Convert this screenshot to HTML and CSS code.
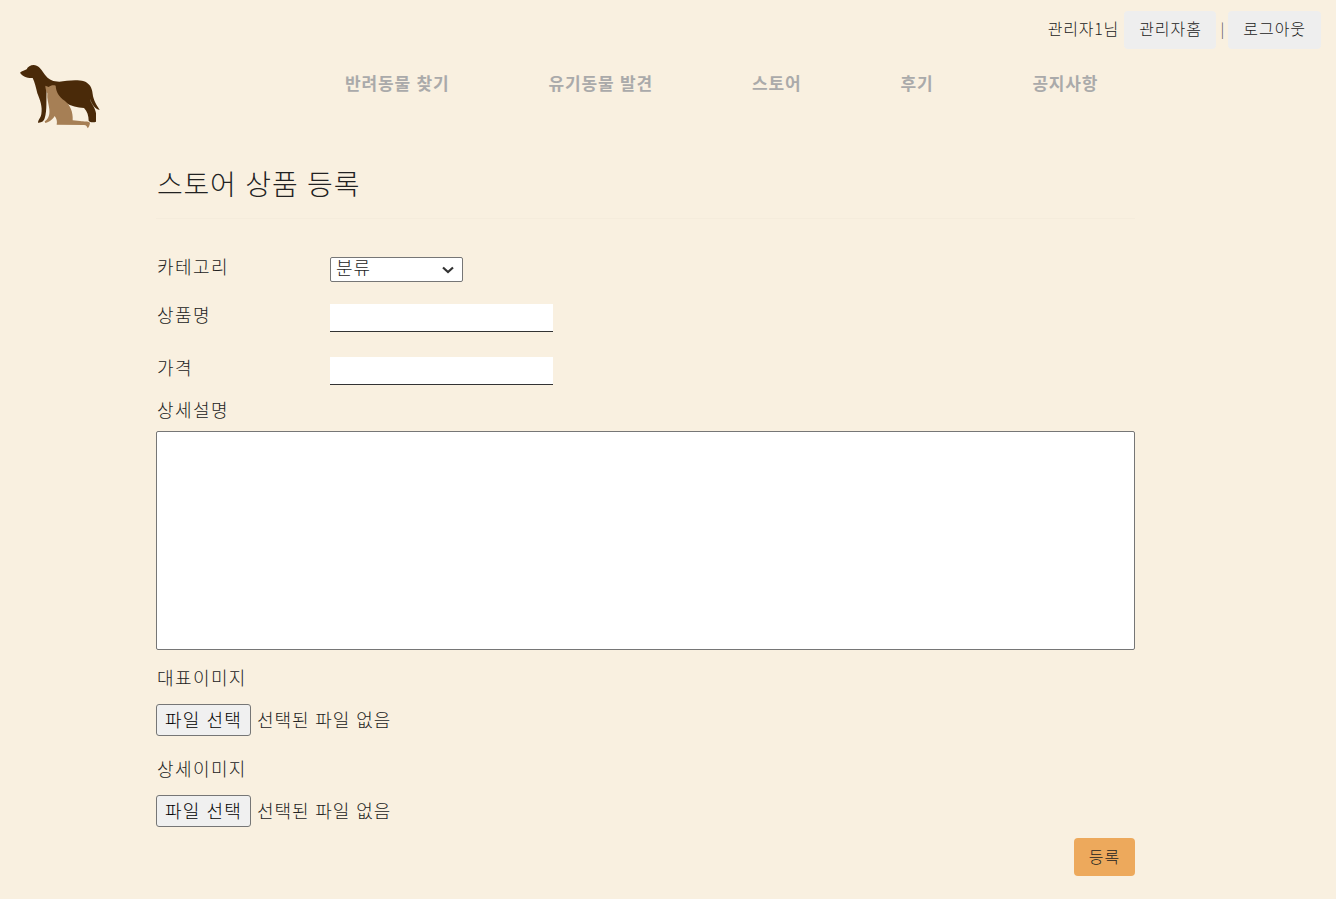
FILE: index.html
```html
<!DOCTYPE html>
<html lang="ko">
<head>
<meta charset="utf-8">
<title>스토어 상품 등록</title>
<link rel="stylesheet" href="styles.css">
</head>
<body>
<header class="top">
  <div class="util">
    <span class="user">관리자1님</span>
    <a class="chip">관리자홈</a>
    <span class="sep">|</span>
    <a class="chip">로그아웃</a>
  </div>
  <div class="brandrow">
    <svg class="logo" viewBox="0 0 360 270" width="120" height="90" aria-hidden="true">
      <path fill="#4a2a09" d="M60 68 C66 62 74 62 80 58 C84 48 98 42 110 47 C122 52 128 66 138 78 C148 90 160 95 178 95 C200 92 232 88 252 94 C268 100 276 112 278 132 C280 150 290 166 299 179 C288 180 276 164 270 146 C272 160 286 172 288 190 L288 215 C280 218 270 217 266 212 C266 198 262 184 252 174 C232 172 214 168 196 158 L170 150 C160 130 150 122 140 120 C138 150 142 180 134 205 C132 214 124 219 114 218 C114 210 122 204 124 192 C128 170 120 150 112 130 C108 112 104 96 98 84 C88 84 68 82 60 68 Z"/>
      <path fill="#a67f55" d="M136 107 L146 111 C152 106 160 104 167 107 C168 124 176 140 194 152 C210 164 220 186 218 211 L240 213 C252 215 264 213 270 218 C269 226 267 231 263 235 C261 230 259 225 252 225 L170 224 C172 214 170 206 164 198 C160 206 150 216 136 219 L134 214 C144 208 150 196 148 178 C146 160 140 146 142 130 C138 122 136 114 136 107 Z"/>
    </svg>
    <nav class="gnb">
      <a>반려동물 찾기</a>
      <a>유기동물 발견</a>
      <a>스토어</a>
      <a>후기</a>
      <a>공지사항</a>
    </nav>
  </div>
</header>
<main class="wrap">
  <h1 class="title">스토어 상품 등록</h1>
  <form class="form">
    <div class="row row-cat">
      <label class="lbl">카테고리</label>
      <select class="sel"><option>분류</option></select>
    </div>
    <div class="row row-name">
      <label class="lbl">상품명</label>
      <input class="txt" type="text">
    </div>
    <div class="row row-price">
      <label class="lbl">가격</label>
      <input class="txt" type="text">
    </div>
    <label class="lbl lbl-desc">상세설명</label>
    <textarea class="area"></textarea>
    <label class="lbl lbl-img">대표이미지</label>
    <div class="file"><button type="button" class="filebtn">파일 선택</button><span class="filetxt">선택된 파일 없음</span></div>
    <label class="lbl lbl-img2">상세이미지</label>
    <div class="file"><button type="button" class="filebtn">파일 선택</button><span class="filetxt">선택된 파일 없음</span></div>
    <div class="actions"><button type="button" class="submit">등록</button></div>
  </form>
</main>
</body>
</html>
```
FILE: styles.css
```css
* { box-sizing: border-box; }
html, body { margin: 0; }
body {
  background: #f9f0e0;
  color: #222;
  font-family: "Noto Sans CJK KR", "Liberation Sans", sans-serif;
  font-size: 16px;
  font-weight: 300;
  height: 899px;
  overflow: hidden;
}
.top { padding-top: 11px; }
.util {
  display: flex;
  justify-content: flex-end;
  align-items: center;
  height: 38px;
  padding-right: 15.5px;
}
.user { margin-right: 5px; font-size: 16px; letter-spacing: .8px; padding-bottom: 5px; }
.chip {
  background: #eeeeee;
  border-radius: 4px;
  height: 38px;
  display: flex;
  align-items: center;
  padding: 0 14.5px 4px 15px;
  font-size: 16px;
  letter-spacing: .95px;
}
.sep { width: 12px; text-align: center; color: #555; font-size: 15px; padding-bottom: 4px; }
.brandrow {
  display: flex;
  height: 91px;
  padding-top: 1px;
}
.logo { flex: none; }
.gnb {
  display: flex;
  gap: 99px;
  margin-left: 225px;
  padding-top: 20px;
}
.gnb a {
  color: #aaa;
  font-weight: 700;
  font-size: 17px;
  letter-spacing: .84px;
  line-height: 25px;
}
.wrap { margin-left: 156px; width: 979px; }
.title {
  margin: 0;
  font-size: 28px;
  font-weight: 300;
  line-height: 40px;
  height: 79px;
  padding: 23px 0 0 1px;
  letter-spacing: .8px;
  border-bottom: 1px solid #f5ecdc;
}
.form { display: block; }
.row { display: flex; align-items: flex-start; }
.lbl { display: block; font-size: 18px; line-height: 26px; letter-spacing: 1.4px; padding-left: 1px; }
.row .lbl { width: 174px; flex: none; }
.row-cat { margin-top: 34px; height: 48px; }
.row-name { height: 53px; }
.row-price { height: 42px; }
.sel {
  appearance: none;
  width: 133px;
  height: 25px;
  margin-top: 4px;
  font: 300 18px/1 "Noto Sans CJK KR", sans-serif;
  letter-spacing: 1px;
  padding: 0 0 5px 5px;
  background: #fff url("data:image/svg+xml,%3Csvg xmlns='http://www.w3.org/2000/svg' width='14' height='8' viewBox='0 0 14 8'%3E%3Cpath d='M2 1.5 L7 6 L12 1.5' fill='none' stroke='%23333' stroke-width='2.2'/%3E%3C/svg%3E") no-repeat 110px 8px;
  border: 1px solid #767676;
  border-radius: 2px;
  color: #222;
}
.txt {
  width: 223px;
  height: 28px;
  margin-top: 3px;
  background: #fff;
  border: 0;
  border-bottom: 1px solid #333;
  padding: 0 8px;
  outline: none;
}
.lbl-desc { height: 35px; line-height: 26px; }
.area {
  display: block;
  width: 979px;
  height: 219px;
  background: #fff;
  border: 1px solid #767676;
  border-radius: 2px;
  resize: none;
}
.lbl-img { margin-top: 14px; height: 40px; }
.lbl-img2 { margin-top: 19px; height: 40px; }
.file { display: flex; align-items: center; height: 32px; }
.filebtn {
  width: 95px;
  height: 32px;
  font: 300 18px/1 "Noto Sans CJK KR", sans-serif;
  letter-spacing: 1.1px;
  color: #000;
  background: #f0f0f0;
  border: 1px solid #767676;
  border-radius: 3px;
  padding: 0 0 2px;
}
.filetxt { margin-left: 6px; font-size: 18px; letter-spacing: .9px; padding-bottom: 2px; }
.actions { display: flex; justify-content: flex-end; margin-top: 11px; }
.submit {
  width: 61px;
  height: 38px;
  background: #eda95c;
  border: 0;
  border-radius: 4px;
  color: #222;
  font: 300 16px/1 "Noto Sans CJK KR", sans-serif;
  letter-spacing: 1px;
  padding: 0 0 2px;
}
```
